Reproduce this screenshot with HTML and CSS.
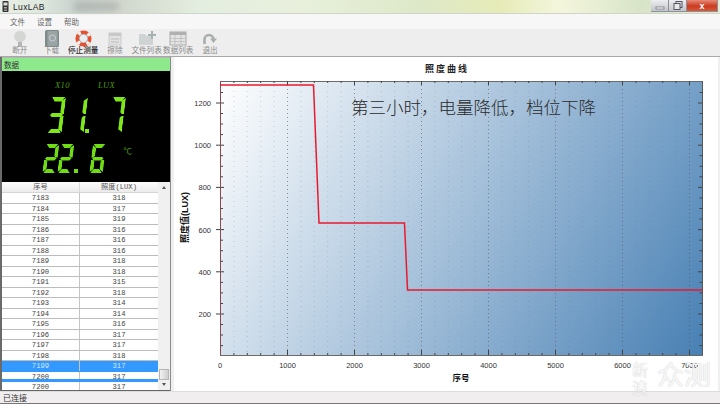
FILE: index.html
```html
<!DOCTYPE html>
<html lang="zh">
<head>
<meta charset="utf-8">
<title>LuxLAB</title>
<link rel="stylesheet" href="styles.css">
</head>
<body>
<div class="app">
  <header class="titlebar">
    <svg class="appicon" width="7" height="11" viewBox="0 0 7 11"><rect x="0.5" y="0" width="6" height="11" rx="1" fill="#333"/><rect x="1.5" y="1.5" width="4" height="3" fill="#ddd"/><rect x="2" y="6" width="3" height="1.5" fill="#aaa"/><rect x="2" y="8.5" width="3" height="1.5" fill="#999"/></svg>
    <span class="apptitle">LuxLAB</span>
    <span class="blurred"></span>
    <div class="winbtns">
      <span class="winbtn"><svg width="10" height="8" viewBox="0 0 10 8"><rect x="1" y="5" width="8" height="2" fill="#fff" stroke="#667" stroke-width=".7"/></svg></span>
      <span class="winbtn"><svg width="10" height="9" viewBox="0 0 10 9"><rect x="3" y="0.5" width="6" height="6" fill="none" stroke="#556" stroke-width="1"/><rect x="1" y="2.5" width="6" height="6" fill="#e8e8e8" stroke="#556" stroke-width="1"/></svg></span>
      <span class="winbtn close">x</span>
    </div>
  </header>
  <nav class="menubar"><span>文件</span><span>设置</span><span>帮助</span></nav>
  <div class="toolbar">
    <div class="tool">
      <svg width="16" height="17" viewBox="0 0 16 17"><circle cx="8" cy="6.500" r="5.800" fill="#d4d6d4"/><rect x="6" y="12" width="4" height="4.500" fill="#b5b5b5"/></svg>
      <span>断开</span>
    </div>
    <div class="tool">
      <svg width="16" height="17" viewBox="0 0 16 17"><rect x="1" y="0" width="14" height="17" rx="1.500" fill="#7f8b8a"/><rect x="3.500" y="1" width="10" height="15" fill="#9aa5a3"/><circle cx="8.500" cy="8" r="3" fill="none" stroke="#ccd" stroke-width="1"/></svg>
      <span>下载</span>
    </div>
    <div class="tool active">
      <svg width="17" height="17" viewBox="0 0 17 17"><circle cx="8.500" cy="8.500" r="6.300" fill="#e9eef1"/><circle cx="8.500" cy="8.500" r="6.300" fill="none" stroke="#e85030" stroke-width="3.600"/><circle cx="8.500" cy="8.500" r="6.300" fill="none" stroke="#f6f0ec" stroke-width="3.600" stroke-dasharray="3 6.900" stroke-dashoffset="-3.450"/><circle cx="8.500" cy="8.500" r="4.300" fill="none" stroke="#777" stroke-width=".5"/></svg>
      <span>停止测量</span>
    </div>
    <div class="tool">
      <svg width="16" height="17" viewBox="0 0 16 17"><rect x="2" y="3" width="12" height="12" fill="#e2e2e2" stroke="#ccc"/><rect x="2" y="3" width="12" height="3" fill="#c8c8c8"/><path d="M4 9h8M4 12h8" stroke="#bbb"/></svg>
      <span>擦除</span>
    </div>
    <div class="tool">
      <svg width="18" height="17" viewBox="0 0 18 17"><path d="M1 4h6l1.500 2H15v9H1z" fill="#cfd3d4"/><path d="M13 1h2v3h3v2h-3v3h-2V6h-3V4h3z" fill="#a9b0b2"/></svg>
      <span>文件列表</span>
    </div>
    <div class="tool">
      <svg width="18" height="17" viewBox="0 0 18 17"><rect x="1" y="2" width="16" height="13" fill="#e4e4e4" stroke="#aaa"/><rect x="1" y="2" width="16" height="3" fill="#b0b0b0"/><path d="M1 8.500h16M1 11.500h16M6 5v10M12 5v10" stroke="#bbb" stroke-width=".8"/></svg>
      <span>数据列表</span>
    </div>
    <div class="tool">
      <svg width="16" height="17" viewBox="0 0 16 17"><path d="M2.500 14V9.500a4.500 4.500 0 0 1 9 0" fill="none" stroke="#a9adad" stroke-width="2.600"/><path d="M8 8.500h7l-3.500 4.500z" fill="#a9adad"/></svg>
      <span>退出</span>
    </div>
  </div>
  <main class="main">
    <section class="leftpanel">
      <div class="panelhead">数据</div>
      <div class="lcd" role="img" aria-label="X10 LUX 31.7 22.6 ℃">
        <div class="lcdlabels"><span>X10</span><span>LUX</span></div>
        <div class="seven big">
          <div class="d n3"><i class="a"></i><i class="b"></i><i class="c"></i><i class="d1"></i><i class="g"></i></div>
          <div class="d one"><i class="b"></i><i class="c"></i></div>
          <div class="dot"></div>
          <div class="d n7"><i class="a"></i><i class="b"></i><i class="c"></i></div>
        </div>
        <div class="seven small">
          <div class="d"><i class="a"></i><i class="b"></i><i class="g"></i><i class="e"></i><i class="d1"></i></div>
          <div class="d"><i class="a"></i><i class="b"></i><i class="g"></i><i class="e"></i><i class="d1"></i></div>
          <div class="dot"></div>
          <div class="d n6"><i class="a"></i><i class="f"></i><i class="g"></i><i class="e"></i><i class="c"></i><i class="d1"></i></div>
          <span class="degc">℃</span>
        </div>
      </div>
      <div class="tablewrap">
        <div class="table">
          <div class="thead"><span>序号</span><span>照度(LUX)</span></div>
          <div class="row"><span>7183</span><span>318</span></div>
          <div class="row"><span>7184</span><span>317</span></div>
          <div class="row"><span>7185</span><span>319</span></div>
          <div class="row"><span>7186</span><span>316</span></div>
          <div class="row"><span>7187</span><span>316</span></div>
          <div class="row"><span>7188</span><span>316</span></div>
          <div class="row"><span>7189</span><span>318</span></div>
          <div class="row"><span>7190</span><span>318</span></div>
          <div class="row"><span>7191</span><span>315</span></div>
          <div class="row"><span>7192</span><span>318</span></div>
          <div class="row"><span>7193</span><span>314</span></div>
          <div class="row"><span>7194</span><span>314</span></div>
          <div class="row"><span>7195</span><span>316</span></div>
          <div class="row"><span>7196</span><span>317</span></div>
          <div class="row"><span>7197</span><span>317</span></div>
          <div class="row"><span>7198</span><span>318</span></div>
          <div class="row selected"><span>7199</span><span>317</span></div>
          <div class="row"><span>7200</span><span>317</span></div>
          <div class="row"><span>7200</span><span>317</span></div>
          <div class="bluebar"></div>
        </div>
        <div class="scrollbar">
          <span class="arrow up"></span>
          <span class="thumb"></span>
          <span class="arrow down"></span>
        </div>
      </div>
    </section>
    <section class="chartpanel">
      <svg class="chart" width="544" height="334" viewBox="174 57 544 334">
        <defs>
          <linearGradient id="plotbg" gradientUnits="userSpaceOnUse" x1="220" y1="81" x2="703" y2="355">
            <stop offset="0" stop-color="#ffffff"/>
            <stop offset="1" stop-color="#4880b4"/>
          </linearGradient>
          <path id="yticks" d="M0 92.500h3M0 113.500h3M0 124h3M0 134.600h3M0 155.700h3M0 166.300h3M0 176.800h3M0 198h3M0 208.500h3M0 219h3M0 240.200h3M0 250.700h3M0 261.300h3M0 282.400h3M0 292.900h3M0 303.500h3M0 324.500h3M0 335h3M0 345.600h3"/>
        </defs>
        <text class="charttitle" x="447" y="71.500" text-anchor="middle">照度曲线</text>
        <rect x="220" y="81" width="483" height="274" fill="url(#plotbg)"/>
        <path class="gridminor" d="M233.900 81V355M247.300 81V355M260.700 81V355M274.100 81V355M300.900 81V355M314.300 81V355M327.700 81V355M341.100 81V355M367.900 81V355M381.300 81V355M394.700 81V355M408.100 81V355M434.900 81V355M448.300 81V355M461.700 81V355M475.100 81V355M501.900 81V355M515.300 81V355M528.700 81V355M542.100 81V355M568.900 81V355M582.300 81V355M595.700 81V355M609.100 81V355M635.900 81V355M649.300 81V355M662.700 81V355M676.100 81V355"/>
        <path class="gridmajor" d="M287.500 81V355M354.500 81V355M421.500 81V355M488.500 81V355M555.500 81V355M622.500 81V355M689.500 81V355"/>
        <path class="tickdark" d="M220 81.500H703M220 355.500H703"/>
        <path class="tick" d="M233.900 355v-2M247.300 355v-2M260.700 355v-2M274.100 355v-2M300.900 355v-2M314.300 355v-2M327.700 355v-2M341.100 355v-2M367.900 355v-2M381.300 355v-2M394.700 355v-2M408.100 355v-2M434.900 355v-2M448.300 355v-2M461.700 355v-2M475.100 355v-2M501.900 355v-2M515.300 355v-2M528.700 355v-2M542.100 355v-2M568.900 355v-2M582.300 355v-2M595.700 355v-2M609.100 355v-2M635.900 355v-2M649.300 355v-2M662.700 355v-2M676.100 355v-2M233.900 81v2M247.300 81v2M260.700 81v2M274.100 81v2M300.900 81v2M314.300 81v2M327.700 81v2M341.100 81v2M367.900 81v2M381.300 81v2M394.700 81v2M408.100 81v2M434.900 81v2M448.300 81v2M461.700 81v2M475.100 81v2M501.900 81v2M515.300 81v2M528.700 81v2M542.100 81v2M568.900 81v2M582.300 81v2M595.700 81v2M609.100 81v2M635.900 81v2M649.300 81v2M662.700 81v2M676.100 81v2"/>
        <path class="tick" d="M287.500 355v-5M354.500 355v-5M421.500 355v-5M488.500 355v-5M555.500 355v-5M622.500 355v-5M689.500 355v-5M287.500 81v4M354.500 81v4M421.500 81v4M488.500 81v4M555.500 81v4M622.500 81v4M689.500 81v4"/>
        <use href="#yticks" x="220" class="tick"/>
        <use href="#yticks" x="699.500" class="tick"/>
        <path class="tick" d="M216 103h8M216 145.200h8M216 187.400h8M216 229.600h8M216 271.800h8M216 314h8M698 103h5M698 145.200h5M698 187.400h5M698 229.600h5M698 271.800h5M698 314h5"/>
        <path class="yaxis" d="M220.500 81V355"/>
        <path class="rightaxis" d="M702.500 81V355"/>
        <polyline class="curve" points="220,85 313.500,85 319,223 404.500,223 407.500,290 703,290"/>
        <g class="ylabels">
          <text x="211" y="106">1200</text>
          <text x="211" y="148">1000</text>
          <text x="211" y="190">800</text>
          <text x="211" y="233">600</text>
          <text x="211" y="275">400</text>
          <text x="211" y="317">200</text>
        </g>
        <g class="xlabels">
          <text x="220" y="368">0</text>
          <text x="287.500" y="368">1000</text>
          <text x="354.500" y="368">2000</text>
          <text x="421.500" y="368">3000</text>
          <text x="488.500" y="368">4000</text>
          <text x="555.500" y="368">5000</text>
          <text x="622.500" y="368">6000</text>
          <text x="689.500" y="368">7000</text>
        </g>
        <text class="axistitle" x="461" y="381" text-anchor="middle">序号</text>
        <text class="axistitle ytitle" transform="translate(188 217.500) rotate(-90)" text-anchor="middle">照度值(LUX)</text>
        <text class="note" x="351" y="114">第三小时，电量降低，档位下降</text>
      </svg>
    </section>
  </main>
  <footer class="statusbar">已连接</footer>
  <div class="watermark" aria-label="新浪众测">
    <span class="wm-small">新<br>浪</span>
    <span class="wm-big">众测</span>
  </div>
</div>
</body>
</html>
```
FILE: styles.css
```css
* { box-sizing: border-box; }
html, body { margin: 0; padding: 0; }
body { font-family: "Noto Sans CJK SC", "Liberation Sans", sans-serif; background: #f0f0f0; }
.app { position: relative; width: 720px; height: 404px; overflow: hidden; background: #f0f0f0; display: flex; flex-direction: column; }

.titlebar { height: 14px; display: flex; align-items: center; padding-left: 2px; gap: 4px;
  background: linear-gradient(90deg, #e8efe6 0, #dfe8de 40px, #c6cfcb 80px, #d0d6cc 120px, #e4eee0 200px, #e8f0dc 300px, #dde8c8 420px, #e6ebb8 500px, #f4f6dc 560px, #d8e4c8 640px, #e4ead8 720px);
  border-bottom: 1px solid #cfd4cc; position: relative; }
.appicon { flex: none; }
.apptitle { font: 8.5px "Liberation Sans", sans-serif; letter-spacing: .35px; color: #222; }
.blurred { position: absolute; left: 74px; top: 3px; width: 44px; height: 7px; background: #a4a8a6; filter: blur(3px); opacity: .7; }
.winbtns { margin-left: auto; margin-right: 2px; display: flex; height: 12px; align-self: flex-start; }
.winbtn { width: 18px; height: 12px; display: flex; align-items: center; justify-content: center; background: linear-gradient(#eceef0, #c2c6ca); border: 1px solid #8d9196; border-top: 0; border-left-width: 0; }
.winbtn.close { width: 31px; background: linear-gradient(#e58a78, #cb3a20 55%, #d85a3a); color: #fff; font: bold 9px/10px "Liberation Sans", sans-serif; }

.menubar { height: 15px; background: #f7f7f7; display: flex; align-items: center; gap: 12px; padding-left: 10px; font-size: 7.5px; color: #666; }

.toolbar { height: 28px; background: #eeeeee; border-bottom: 1px solid #a8a8a8; display: flex; padding-left: 4px; padding-top: 1px; }
.tool { width: 31.7px; display: flex; flex-direction: column; align-items: center; font-size: 7.6px; line-height: 9px; color: #8a8a8a; white-space: nowrap; height: 26px; justify-content: flex-start; }
.tool svg { flex: none; }
.tool span { margin-top: -2px; }
.tool.active { color: #2c2c2c; font-weight: 500; }

.main { height: 334px; display: flex; padding: 0 2px 0 0; }
.leftpanel { width: 171px; margin-right: 3px; display: flex; flex-direction: column; border-left: 2px solid #6a6a6a; border-right: 1px solid #8a8a8a; overflow: hidden; }
.panelhead { height: 14px; background: #8ee88c; font-size: 7.6px; line-height: 14px; padding-left: 2px; color: #333; flex: none; border-top: 1px solid #b5b5b5; }
.lcd { height: 111px; background: #000; flex: none; color: #7fe81a; padding-top: 9px; }
.lcdlabels { display: flex; gap: 28px; padding-left: 53px; font: italic 8.5px/10px "Liberation Serif", serif; color: #4c9c12; letter-spacing: .4px; height: 9px; }

.seven { display: flex; }
.seven.big { --w: 15px; --h: 36px; --t: 4.5px; padding: 8px 0 0 46.5px; height: 44px; }
.seven.small { --w: 13.5px; --h: 29px; --t: 4px; padding: 11px 0 0 41.5px; height: 40px; color: #6fdc16; }
.seven .d { position: relative; width: var(--w); height: var(--h); transform: skewX(-7deg); flex: none; }
.seven .d i { position: absolute; background: currentColor; }
.seven .a, .seven .g, .seven .d1 { left: 1px; right: 1px; height: var(--t); }
.seven .a { top: 0; clip-path: polygon(0 0, 100% 0, calc(100% - 3px) 100%, 3px 100%); }
.seven .g { top: calc(50% - var(--t) / 2); clip-path: polygon(2px 0, calc(100% - 2px) 0, 100% 50%, calc(100% - 2px) 100%, 2px 100%, 0 50%); }
.seven .d1 { bottom: 0; clip-path: polygon(3px 0, calc(100% - 3px) 0, 100% 100%, 0 100%); }
.seven .b, .seven .c, .seven .e, .seven .f { width: var(--t); height: calc(50% - 2px); }
.seven .b, .seven .c { right: 0; }
.seven .e, .seven .f { left: 0; }
.seven .b, .seven .f { top: 1px; clip-path: polygon(0 3px, 100% 0, 100% 100%, 50% 100%, 0 calc(100% - 2px)); }
.seven .c, .seven .e { bottom: 1px; clip-path: polygon(0 2px, 50% 0, 100% 0, 100% 100%, 0 calc(100% - 3px)); }
.seven .f { left: 0; clip-path: polygon(0 0, 100% 3px, 100% calc(100% - 2px), 50% 100%, 0 100%); }
.seven .e { clip-path: polygon(50% 0, 100% 2px, 100% calc(100% - 3px), 0 100%, 0 0); }
.seven .d.one { width: 8px; margin-left: 14.5px; }
.seven .dot { width: 4px; height: 4px; background: currentColor; align-self: flex-end; flex: none; }
.seven.big .dot { margin-left: -1px; }
.seven.big .d.n7 { margin-left: 20.5px; width: 14px; }
.seven.small .d + .d { margin-left: 1.5px; }
.seven.small .dot { margin-left: 2px; margin-right: 12.5px; }
.seven.small .d.n6 { margin-left: 0; }
.degc { font-size: 8.5px; line-height: 10px; color: #4c9c12; margin: 1px 0 0 19.5px; }

.tablewrap { flex: 1; min-height: 0; display: flex; background: #fff; border-bottom: 1px solid #666; }
.table { position: relative; width: 156px; flex: none; overflow: hidden; font: 7.2px "Liberation Mono", monospace; color: #444; }
.thead { display: grid; grid-template-columns: 77px 79px; height: 11px; background: linear-gradient(#fdfdfd, #ececec); border-bottom: 1px solid #d5d5d5; text-align: center; line-height: 11px; font-family: "Liberation Mono", "Noto Sans CJK SC", monospace; color: #555; }
.thead span + span { border-left: 1px solid #d9d9d9; }
.row { display: grid; grid-template-columns: 77px 79px; height: 10.5px; border-bottom: 1px solid #bcbcbc; text-align: center; line-height: 10px; }
.row span + span { border-left: 1px solid #c4c4c4; }
.row.selected { background: #3399ff; color: #d4e8ff; border-bottom-color: #3399ff; }
.bluebar { position: absolute; left: 0; right: 0; top: 197px; height: 3px; background: #3399ff; }
.scrollbar { flex: 1; background: #f0f0f0; display: flex; flex-direction: column; align-items: center; position: relative; padding-top: 4px; }
.arrow { width: 0; height: 0; border-left: 2.5px solid transparent; border-right: 2.5px solid transparent; }
.arrow.up { border-bottom: 3px solid #555; }
.arrow.down { border-top: 3px solid #555; margin-top: 3px; }
.thumb { width: 10px; height: 11px; margin-top: auto; background: linear-gradient(90deg, #f2f2f2, #cfcfcf); border: 1px solid #b5b5b5; }
.scrollbar .arrow.down { margin-bottom: 4px; }

.chartpanel { flex: 1; background: #fff; border-top: 1px solid #fff; overflow: hidden; }
.chart { display: block; margin-top: -1px; font-family: "Liberation Sans", "Noto Sans CJK SC", sans-serif; }
.charttitle { font-size: 9px; font-weight: 700; fill: #222; letter-spacing: 2px; }
.gridminor { stroke: #6f7f8f; stroke-opacity: .3; stroke-width: 1; stroke-dasharray: 1 4; fill: none; }
.gridmajor { stroke: #555; stroke-opacity: .6; stroke-width: 1; stroke-dasharray: 1 3; fill: none; }
.tickdark { stroke: #6a6a6a; stroke-width: 1; fill: none; }
.tick { stroke: #444; stroke-width: 1; fill: none; }
.yaxis { stroke: #8a4a50; stroke-width: 1; fill: none; }
.rightaxis { stroke: #555; stroke-width: 1; fill: none; }
.curve { fill: none; stroke: #ea1a2e; stroke-width: 1.5; }
.ylabels text { font-size: 7.5px; fill: #333; text-anchor: end; }
.xlabels text { font-size: 7.5px; fill: #333; text-anchor: middle; }
.axistitle { font-size: 8.5px; font-weight: 700; fill: #111; }
.ytitle { font-size: 9px; }
.note { font-size: 17.5px; fill: #2a2a2a; font-weight: 300; }

.statusbar { height: 13px; background: #f0eeee; border-top: 1px solid #ddd; border-bottom: 1px solid #777; font-size: 8px; line-height: 12px; padding-left: 3px; color: #333; }

.watermark { position: absolute; left: 632px; top: 360px; display: flex; gap: 9px; color: rgba(255,255,255,.88); text-shadow: 0 0 1px rgba(120,120,120,.5); }
.wm-small { font-size: 16px; line-height: 18px; font-weight: 400; }
.wm-big { font-size: 27px; line-height: 27px; font-weight: 400; }
```
